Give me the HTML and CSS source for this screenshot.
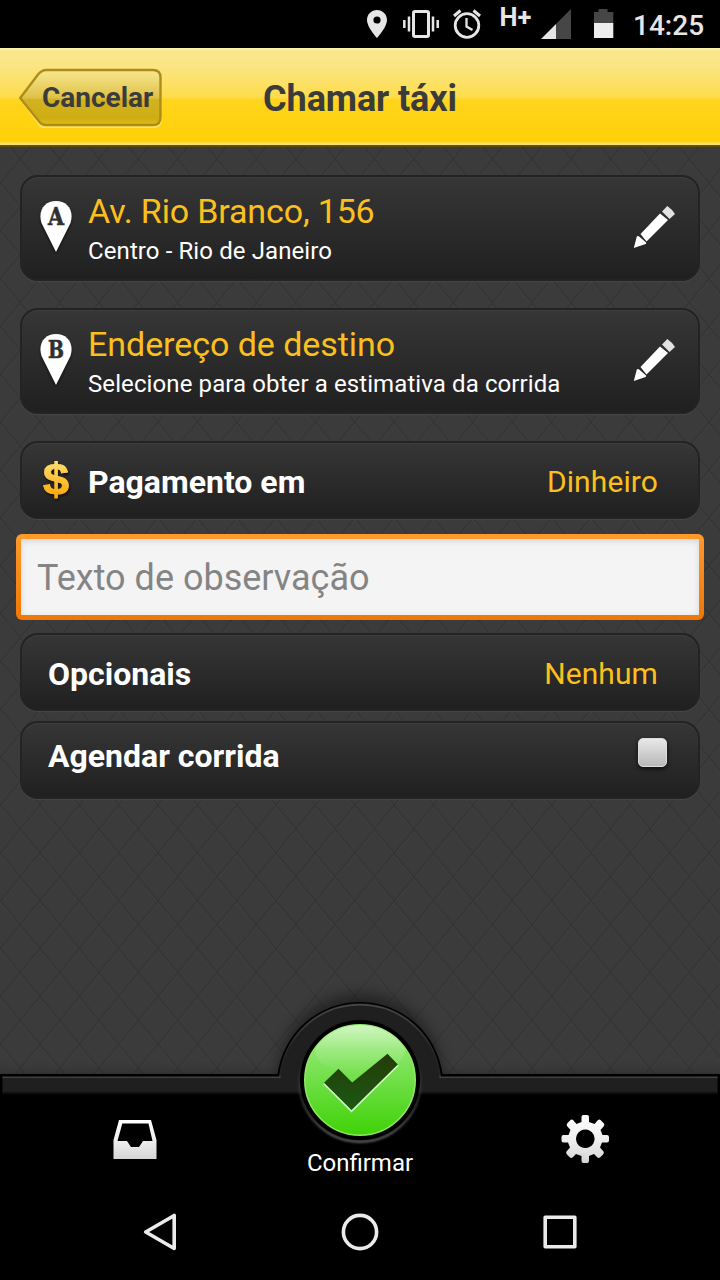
FILE: index.html
```html
<!DOCTYPE html>
<html lang="pt-BR">
<head>
<meta charset="utf-8">
<title>Chamar táxi</title>
<link rel="stylesheet" href="styles.css">
</head>
<body>
<div class="phone">
  <div class="status">
    <svg class="st-icons" width="226" height="48" viewBox="363 0 226 48">
      <path fill="#e6e6e6" fill-rule="evenodd" d="M377 10c-5.600 0-10 4.400-10 10 0 7.300 10 18 10 18s10-10.700 10-18c0-5.600-4.400-10-10-10zm0 6.400a3.600 3.600 0 1 1 0 7.200 3.600 3.600 0 0 1 0-7.200z"/>
      <g fill="none" stroke="#e6e6e6">
        <rect x="413.500" y="11.500" width="15" height="25" rx="1.500" stroke-width="3"/>
        <path stroke-width="2.500" d="M409 16.500v15M433 16.500v15M404.300 20v8M437.700 20v8"/>
        <circle cx="467" cy="25.500" r="11.800" stroke-width="2.800"/>
        <path stroke-width="2.300" d="M466.500 18v8.500l6 3.500"/>
        <path stroke-width="3" d="M454 16l6.500-5.500M480 16l-6.500-5.500"/>
      </g>
      <text class="net" x="499.500" y="26">H+</text>
      <path fill="#464646" d="M556 24l15-15v30h-15z"/><path fill="#e6e6e6" d="M541 39l15-15v15z"/>
    </svg>
    <svg width="20" height="48" viewBox="594 0 20 48">
      <path fill="#464646" d="M594 12h4.500V9h9v3h5.800v11H594z"/><path fill="#ededed" d="M594 23h19.300v15H594z"/>
    </svg>
    <span class="clock">14:25</span>
  </div>

  <header class="header">
    <button class="back">
      <svg class="back-shape" width="146" height="62" viewBox="18 67 146 62">
        <defs><linearGradient id="bk" x1="0" y1="0" x2="0" y2="1">
          <stop offset="0" stop-color="#f8e58d"/><stop offset=".12" stop-color="#f3df80"/><stop offset=".5" stop-color="#ddc248"/><stop offset=".54" stop-color="#d3b222"/><stop offset=".88" stop-color="#cead12"/><stop offset="1" stop-color="#e0bd1a"/></linearGradient></defs>
        <path d="M22 99l18-23q4-5 9-5h104q8 0 8 8v39q0 8-8 8H44q-3 0-5-3z" fill="none" stroke="#ffe96f" stroke-width="2" opacity=".8"/>
        <path d="M20.200 97L38 73.500q4-4.500 8-4.500H153q7.500 0 7.500 7.500v40q0 7.500-7.500 7.500H45.500q-3.500 0-6-3z" fill="url(#bk)" stroke="#ad8c1a" stroke-width="2.400"/>
      </svg>
      <span class="back-text">Cancelar</span>
    </button>
    <h1 class="title">Chamar táxi</h1>
  </header>

  <main class="main">
    <svg class="pattern" width="720" height="1133">
      <defs><pattern id="mesh" width="39.350" height="47.850" patternUnits="userSpaceOnUse" patternTransform="translate(20.300 12.300)">
        <path d="M0 1.500L39.350 49.350M39.350 1.500L0 49.350M0-46.350L39.350 1.500M39.350-46.350L0 1.500" stroke="#414141"/>
        <path d="M0 0L39.350 47.850M39.350 0L0 47.850" stroke="#343434" stroke-width="1.500"/></pattern></defs>
      <rect width="720" height="1133" fill="url(#mesh)"/>
    </svg>

    <section class="card address">
      <svg class="pin" width="38" height="58" viewBox="37 197 38 58">
        <path class="shade" d="M41.500 223C37.500 210 45 201 56 201s18.500 9 14.500 22L56 252z"/>
        <text class="pin-letter" x="48" y="225" textLength="16" lengthAdjust="spacingAndGlyphs">A</text>
      </svg>
      <div class="lines"><div class="place first">Av. Rio Branco, 156</div><div class="sub">Centro - Rio de Janeiro</div></div>
      <svg class="pencil" width="44" height="44" viewBox="632 205 44 44">
        <path fill="#fff" d="M633.800 248l3-11.500q.7-1 2-.2l7 6q1 1-.2 1.800zM640.500 234l19.500-20.500 8 6.500-21.500 21.500z"/><path fill="#e2e2e2" d="M662 211.500l5.300-5.500q4.500 3 7.700 8l-5.500 5z"/>
      </svg>
    </section>

    <section class="card address">
      <svg class="pin" width="38" height="58" viewBox="37 197 38 58">
        <path class="shade" d="M41.500 223C37.500 210 45 201 56 201s18.500 9 14.500 22L56 252z"/>
        <text class="pin-letter" x="48" y="225" textLength="16" lengthAdjust="spacingAndGlyphs">B</text>
      </svg>
      <div class="lines"><div class="place">Endereço de destino</div><div class="sub">Selecione para obter a estimativa da corrida</div></div>
      <svg class="pencil" width="44" height="44" viewBox="632 205 44 44">
        <path fill="#fff" d="M633.800 248l3-11.500q.7-1 2-.2l7 6q1 1-.2 1.800zM640.500 234l19.500-20.500 8 6.500-21.500 21.500z"/><path fill="#e2e2e2" d="M662 211.500l5.300-5.500q4.500 3 7.700 8l-5.500 5z"/>
      </svg>
    </section>

    <section class="card row pay">
      <svg class="dollar" width="36" height="62" viewBox="38 448 36 62">
        <defs><linearGradient id="gold" gradientUnits="userSpaceOnUse" x1="0" y1="461" x2="0" y2="499"><stop offset="0" stop-color="#ffdf70"/><stop offset="1" stop-color="#ffa400"/></linearGradient></defs>
        <text class="dollar-text" x="43" y="494.500" textLength="26" lengthAdjust="spacingAndGlyphs" fill="url(#gold)" stroke="url(#gold)">$</text>
      </svg>
      <span class="label">Pagamento em</span><span class="value">Dinheiro</span>
    </section>

    <input class="note" type="text" placeholder="Texto de observação">

    <section class="card row"><span class="label">Opcionais</span><span class="value">Nenhum</span></section>
    <section class="card row schedule"><span class="label">Agendar corrida</span><span class="check"></span></section>
  </main>

  <footer class="footer">
    <svg class="dock" width="720" height="290" viewBox="0 990 720 290">
      <defs>
        <linearGradient id="green" x1="0" y1="0" x2="0" y2="1"><stop offset="0" stop-color="#a4ed86"/><stop offset=".5" stop-color="#70df48"/><stop offset="1" stop-color="#3fd206"/></linearGradient>
        <linearGradient id="gloss" x1="0" y1="0" x2="0" y2="1"><stop offset="0" stop-color="#fff" stop-opacity=".48"/><stop offset=".5" stop-color="#fff" stop-opacity=".16"/><stop offset="1" stop-color="#fff" stop-opacity=".01"/></linearGradient>
        <linearGradient id="tick" x1="0" y1="0" x2="0" y2="1"><stop offset="0" stop-color="#273b08"/><stop offset="1" stop-color="#1a5913"/></linearGradient>
        <linearGradient id="fade" x1="0" y1="0" x2="0" y2="1"><stop offset="0" stop-color="#1f1f1f"/><stop offset="1" stop-color="#000"/></linearGradient>
        <linearGradient id="silver" x1="0" y1="0" x2="0" y2="1"><stop offset="0" stop-color="#fff"/><stop offset=".5" stop-color="#f0f0f0"/><stop offset="1" stop-color="#d5d5d5"/></linearGradient>
        <linearGradient id="rim" gradientUnits="userSpaceOnUse" x1="0" y1="1003" x2="0" y2="1077"><stop offset="0" stop-color="#4a4a4a"/><stop offset=".6" stop-color="#262626"/><stop offset=".96" stop-color="#222"/><stop offset="1" stop-color="#414141"/></linearGradient>
        <linearGradient id="ring" x1="0" y1="0" x2="0" y2="1"><stop offset=".3" stop-color="#555" stop-opacity="0"/><stop offset="1" stop-color="#606060"/></linearGradient>
        <filter id="soft" x="-20%" y="-20%" width="140%" height="140%"><feGaussianBlur stdDeviation="7"/></filter>
        <filter id="halo"><feGaussianBlur stdDeviation="1"/></filter>
      </defs>
      <path filter="url(#soft)" opacity=".4" d="M-20 1076H278a82 82 0 0 1 164 0H740v60H-20z"/>
      <path d="M0 1074H277.500a83.260 83.260 0 0 1 165 0H720v206H0z"/>
      <path fill="#1f1f1f" d="M2.500 1077H279.500a80.800 80.800 0 0 1 161 0H717.500v15H2.500z"/>
      <path fill="none" stroke="url(#rim)" stroke-width="1.600" d="M2.500 1077.300H279.800a80.600 80.600 0 0 1 160.400 0H717.500"/>
      <path fill="url(#fade)" d="M2.500 1091h715v4H2.500z"/>
      <circle cx="360" cy="1081.200" r="60.500" fill="none" stroke="url(#ring)" stroke-width="2.500" filter="url(#halo)"/>
      <circle cx="360" cy="1080" r="60"/>
      <circle cx="360" cy="1080" r="55.200" fill="url(#green)" stroke="#8de865" stroke-width="1.600"/>
      <path fill="url(#gloss)" d="M315 1049C322 1034 340 1025 360 1025s38 9 45 24c0 17-20 24-45 24s-45-7-45-24z"/>
      <path d="M324 1083.500l27.500 27.800 46.500-46.300" fill="none" stroke="#d5f7c6" stroke-width="1.800"/>
      <path fill="url(#tick)" d="M324 1082.700l14.500-14 13.700 13.700 35.300-28.600 10.300 10.700-46.300 45.500z"/>
      <path fill="url(#silver)" fill-rule="evenodd" d="M119 1120h32l5.500 20v19h-43v-19zM122.300 1123.500l-4.800 17.500H127l4 6h8l4-6h9.500l-4-17.500z"/>
      <path fill="url(#silver)" fill-rule="evenodd" d="M581.500 1122v-5q0-2 2-2h3.500q2 0 2 2v5l5.500 2 3.500-4q1.500-1 3 .5l2.500 2.500q1.500 1.500.5 3l-3.500 4 2 5h4.500q2 0 2 2v3.500q0 2-2 2h-5l-2 5 3.500 4q1 1.500-.5 3l-2.500 2.500q-1.500 1.500-3 .5l-3.500-3.500-5 2v5q0 2-2 2h-3.500q-2 0-2-2v-5l-5.500-2-3.500 3.500q-1.500 1-3-.5l-2.500-2.500q-1.500-1.500-.5-3l3.500-4-2-5h-4.500q-2 0-2-2v-3.500q0-2 2-2h5l2-5-3.500-4q-1-1.500.5-3l2.500-2.500q1.500-1.500 3-.5l3.500 4zM585.300 1129.500a9.300 9.300 0 1 0 .01 0z"/>
      <g fill="none" stroke="#ebebeb" stroke-width="3.600" stroke-linejoin="round">
        <path d="M174.200 1215.500v33l-28.500-16.500z"/><circle cx="360" cy="1232" r="16.600"/><rect x="545.200" y="1217.200" width="29.600" height="29.600"/>
      </g>
    </svg>
    <span class="confirm">Confirmar</span>
  </footer>
</div>
</body>
</html>
```
FILE: styles.css
```css
* { box-sizing: border-box; }
body { margin: 0; background: #000; font-family: Roboto, sans-serif; }
.phone { width: 720px; height: 1280px; display: flex; flex-direction: column; overflow: hidden; position: relative; background: #3b3b3b; }
.status { height: 48px; flex: none; background: #000; display: flex; padding-left: 363px; }
.status svg { display: block; flex: none; }
.st-icons { margin-right: 5px; }
.net { font: bold 25.500px Roboto, sans-serif; fill: #e6e6e6; }
.clock { margin-left: 19px; font-size: 28px; font-weight: 500; line-height: 51px; color: #e6e6e6; }

.header { height: 99px; flex: none; display: grid; grid-template-columns: 162px 1fr 162px; background: linear-gradient(#fff3b0 0, #fbe88c 3px, #fbe585 18px, #fddc4a 50px, #ffd51e 51px, #ffd006 94px, #f8e070 95px, #f8e070 97px, #6b5600 97px, #5a4905 99px); }
.back { position: relative; border: 0; background: none; margin: 0; padding: 19px 0 0 18px; text-align: left; font: inherit; height: 82px; }
.back-shape { display: block; }
.back-text { position: absolute; left: 42px; top: 33px; font-size: 28px; line-height: 34px; font-weight: bold; color: #3b3b3b; }
.title { margin: 0; text-align: center; font-size: 36px; line-height: 102px; font-weight: bold; letter-spacing: -.1px; color: #3b3b3b; }

.main { position: relative; flex: 1; padding: 28px 20px 0; }
.pattern { position: absolute; left: 0; top: 0; }
.card { position: relative; display: flex; border: 2px solid #232323; border-radius: 18px; background: linear-gradient(#363636, #202020); box-shadow: inset 0 1px 1px #404040, 0 1px 1px #484848; }
.address { height: 106px; margin-bottom: 27px; padding-left: 15px; }
.pin { flex: none; margin-top: 20px; }
.shade { fill: #fff; filter: drop-shadow(0 2px 1px #111); }
.pin-letter { font: bold 24px "DejaVu Serif", serif; fill: #303030; stroke: #303030; stroke-width: .6px; }
.lines { flex: 1; margin-left: 13px; padding-top: 14px; }
.place { font-size: 34px; line-height: 40px; letter-spacing: -.05px; color: #fbc01e; }
.first { letter-spacing: -.15px; }
.sub { font-size: 24px; line-height: 28px; margin-top: 6px; letter-spacing: .1px; color: #fff; }
.pencil { flex: none; margin: 28px 22px 0 0; }
.row { height: 78px; padding: 0 40px 0 26px; line-height: 78px; }
.pay { padding-left: 16px; margin-bottom: 15px; }
.dollar { margin: 5px 14px 0 0; flex: none; }
.dollar-text { font: bold 45px "Liberation Sans", sans-serif; stroke-width: 1; filter: drop-shadow(1px 2px 1px #111); }
.label { font-size: 32px; font-weight: bold; color: #fff; flex: 1; }
.value { font-size: 30px; letter-spacing: .1px; color: #fbc01e; }
.note { position: relative; display: block; width: 688px; height: 86px; margin: 0 -4px 13px; padding: 2px 16px 0; outline: 0; border: 5px solid transparent; border-radius: 6px; background: linear-gradient(#f4f4f4, #f4f4f4) padding-box, linear-gradient(#ff9a2b, #ef7706) border-box; font: 36px Roboto, sans-serif; box-shadow: inset 0 2px 6px #d4d4d4; }
.note::placeholder { color: #848484; opacity: 1; }
.schedule { margin-top: 10px; line-height: 66px; padding-right: 31px; }
.check { width: 29px; height: 29px; margin-top: 15px; border: 1px solid #ddd; border-radius: 5px; background: linear-gradient(#e8e8e8, #b8b8b8); box-shadow: 0 2px 4px #0b0b0b; }

.footer { position: absolute; left: 0; bottom: 0; width: 720px; height: 290px; }
.dock { display: block; overflow: visible; }
.confirm { position: absolute; left: 0; right: 0; top: 158px; text-align: center; font-size: 24px; line-height: 30px; color: #fff; }
```
